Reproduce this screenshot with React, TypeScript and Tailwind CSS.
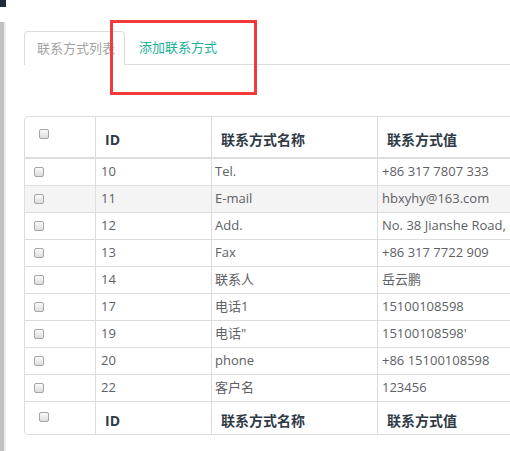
import React from "react";

const rows = [
  { id: "10", name: "Tel.", value: "+86 317 7807 333" },
  { id: "11", name: "E-mail", value: "hbxyhy@163.com", hover: true },
  { id: "12", name: "Add.", value: "No. 38 Jianshe Road," },
  { id: "13", name: "Fax", value: "+86 317 7722 909" },
  { id: "14", name: "联系人", value: "岳云鹏" },
  { id: "17", name: "电话1", value: "15100108598" },
  { id: "19", name: "电话\"", value: "15100108598'" },
  { id: "20", name: "phone", value: "+86 15100108598" },
  { id: "22", name: "客户名", value: "123456" },
];

const font = { fontFamily: '"Open Sans", "Noto Sans CJK SC", sans-serif' };

function Box() {
  return (
    <span className="block h-[10px] w-[10px] rounded-[2px] border border-[#a6a6a6] bg-gradient-to-b from-[#fbfbfb] to-[#dcdcdc]" />
  );
}

function HeadRow({ footer }: { footer?: boolean }) {
  const cell = "flex items-center pl-[9px] pt-[4px] text-[14px] font-bold text-[#2f3a46]";
  return (
    <div
      className={
        footer
          ? "grid h-[33px] grid-cols-[70px_116px_166px_220px] border-b border-[#dddddd]"
          : "grid h-[42px] grid-cols-[70px_116px_166px_220px] border-b-2 border-[#dddddd]"
      }
    >
      <div className={footer ? "pl-[14px] pt-[10px]" : "pl-[14px] pt-[12px]"}>
        <Box />
      </div>
      <div className={`${cell} border-l border-[#dddddd]`}>ID</div>
      <div className={`${cell} border-l border-[#dddddd]`}>联系方式名称</div>
      <div className={`${cell} border-l border-[#dddddd]`}>联系方式值</div>
    </div>
  );
}

export default function App() {
  return (
    <div className="relative flex h-[451px] w-[510px] overflow-hidden bg-white" style={font}>
      <div className="flex w-[6px] flex-col">
        <div className="h-[7px] w-[6px] bg-[#1f2d3a]" />
        <div className="h-[15px]" />
        <div className="flex flex-1">
          <div className="w-[4px] bg-[#c2c2c2]" />
          <div className="w-[2px] bg-[#ececec]" />
        </div>
      </div>

      <div className="flex-1 pl-[18px] pt-[31px]">
        <div className="flex h-[34px] w-[600px] border-b border-[#dddddd]">
          <div className="-mb-px flex w-[101px] items-center rounded-t-[4px] border border-b-0 border-[#dddddd] bg-white pl-[12px] text-[13px] text-[#a3a3a3]">
            联系方式列表
          </div>
          <div className="flex items-center pl-[14px] text-[13px] text-[#1ab394]">添加联系方式</div>
        </div>

        <div className="mt-[51px] w-[574px] overflow-hidden rounded-[4px] border border-[#dddddd] bg-white">
          <HeadRow />
          {rows.map((r) => (
            <div
              key={r.id}
              className={`grid h-[27px] grid-cols-[70px_116px_166px_220px] border-b border-[#dddddd] text-[13px] text-[#5e6165] ${
                r.hover ? "bg-[#f4f4f4]" : ""
              }`}
            >
              <div className="flex items-center pl-[9px]">
                <Box />
              </div>
              <div className="flex items-center whitespace-nowrap border-l border-[#dddddd] pl-[5px]">{r.id}</div>
              <div className="flex items-center whitespace-nowrap border-l border-[#dddddd] pl-[3px]">{r.name}</div>
              <div className="flex items-center whitespace-nowrap border-l border-[#dddddd] pl-[4px]">{r.value}</div>
            </div>
          ))}
          <div className="-mb-px">
            <HeadRow footer />
          </div>
        </div>
      </div>

      <div className="absolute left-[110px] top-[20px] h-[75px] w-[147px] border-[3px] border-[#f23a3a]" />
    </div>
  );
}
